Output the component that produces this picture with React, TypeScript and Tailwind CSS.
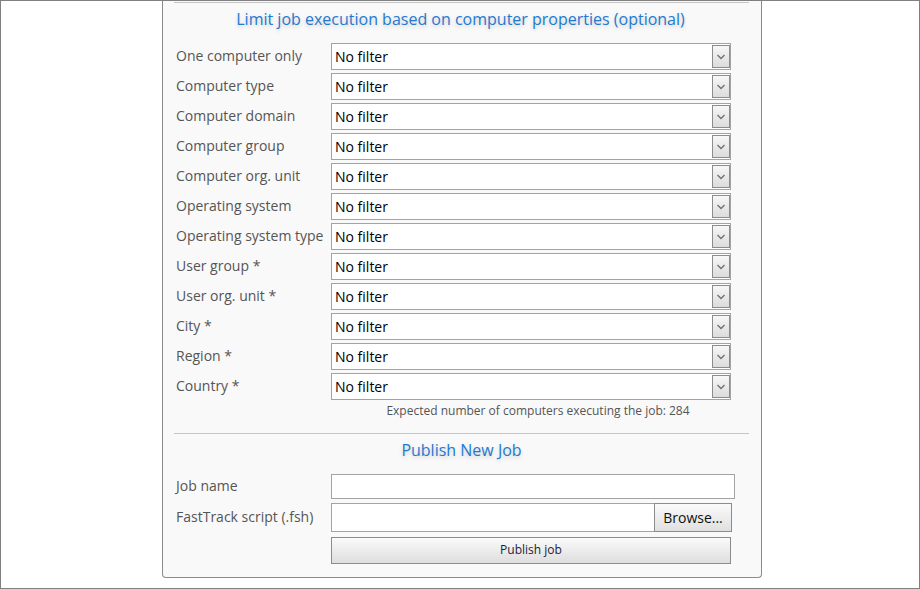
import React from 'react'

const font = { fontFamily: '"Open Sans", "Liberation Sans", sans-serif' }

const filters = [
    'One computer only',
    'Computer type',
    'Computer domain',
    'Computer group',
    'Computer org. unit',
    'Operating system',
    'Operating system type',
    'User group *',
    'User org. unit *',
    'City *',
    'Region *',
    'Country *',
]

function Chevron() {
    return (
        <svg width="10" height="6" viewBox="0 0 10 6" fill="none">
            <path d="M1.5 1 L5 4.5 L8.5 1" stroke="#707070" strokeWidth="1.3" />
        </svg>
    )
}

function FilterSelect() {
    return (
        <div className="relative flex h-[27px] w-[400px] items-center border border-[#a3a3a3] bg-white pl-[3px] text-[14px] text-black">
            No filter
            <div className="absolute top-px right-0 bottom-px flex w-[18px] items-center justify-center border border-[#8c8c8c] bg-gradient-to-b from-[#f7f7f7] to-[#dcdcdc]">
                <Chevron />
            </div>
        </div>
    )
}

function Heading({ children }: { children: React.ReactNode }) {
    return (
        <div className="text-center text-[16px] leading-[24px] text-[#2479d0] [text-shadow:0_2px_4px_rgba(0,0,0,0.18)]">
            {children}
        </div>
    )
}

export default function App() {
    return (
        <div style={font} className="h-[589px] w-[920px] overflow-hidden border border-[#808080] bg-white">
            <div className="-mt-px ml-[161px] flex h-[578px] w-[600px] flex-col rounded-b-[4px] border-x border-b border-[#8a8a8a] bg-[#f9f9f9] pr-[12px] pl-[11px]">
                {/* filters */}
                <div className="mt-[2px] h-px bg-[#c6c6c6]" />
                <div className="mt-[4px] mb-[12px] -ml-[2px]">
                    <Heading>Limit job execution based on computer properties (optional)</Heading>
                </div>
                <div className="flex flex-col gap-[3px]">
                    {filters.map((label) => (
                        <div key={label} className="flex items-center">
                            <div className="-mt-[2px] w-[157px] pl-[2px] text-[14px] leading-[20px] text-[#555]">{label}</div>
                            <FilterSelect />
                        </div>
                    ))}
                </div>
                <div className="mt-[3px] ml-[153px] text-center text-[12px] leading-[16px] text-[#555]">
                    Expected number of computers executing the job: 284
                </div>

                {/* publish */}
                <div className="mt-[14px] h-px bg-[#c6c6c6]" />
                <div className="mt-[4px] mb-[12px]">
                    <Heading>Publish New Job</Heading>
                </div>
                <div className="flex items-center">
                    <div className="-mt-[2px] w-[157px] pl-[2px] text-[14px] leading-[20px] text-[#555]">Job name</div>
                    <div className="h-[25px] w-[404px] border border-[#a3a3a3] bg-white" />
                </div>
                <div className="mt-[4px] flex items-center">
                    <div className="-mt-[2px] w-[157px] pl-[2px] text-[14px] leading-[20px] text-[#555]">FastTrack script (.fsh)</div>
                    <div className="flex h-[29px] w-[401px]">
                        <div className="flex-1 border border-r-0 border-[#a3a3a3] bg-white" />
                        <button className="w-[78px] border border-[#8c8c8c] bg-gradient-to-b from-[#fafafa] to-[#e0e0e0] text-[14px] text-[#111]">
                            Browse...
                        </button>
                    </div>
                </div>
                <div className="mt-[4px] ml-[157px]">
                    <button className="h-[27px] w-[400px] border border-[#8c8c8c] bg-gradient-to-b from-[#fafafa] to-[#dedede] text-[12px] text-[#1c1c38]">
                        Publish job
                    </button>
                </div>
            </div>
        </div>
    )
}
